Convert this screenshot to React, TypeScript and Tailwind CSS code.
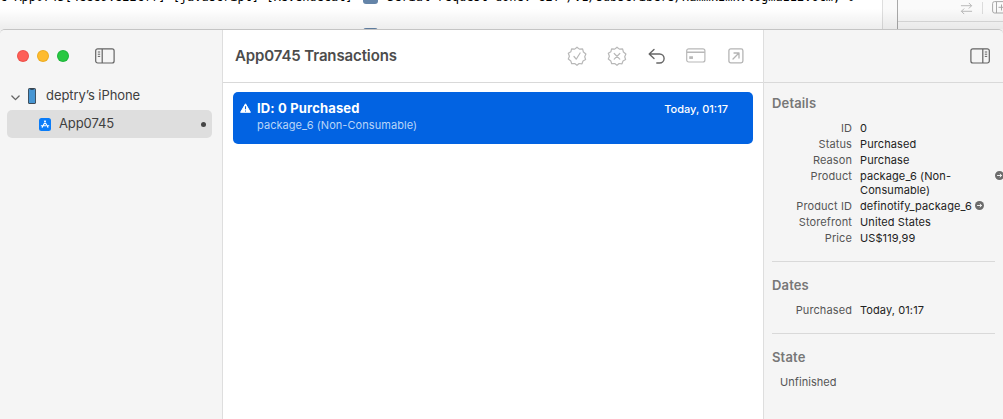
import type { ReactNode } from "react";
import clsx from "clsx";

type Row = { label: string; value: string; link?: "end" | "inline" };

const details: Row[] = [
	{ label: "ID", value: "0" },
	{ label: "Status", value: "Purchased" },
	{ label: "Reason", value: "Purchase" },
	{ label: "Product", value: "package_6 (Non-Consumable)", link: "end" },
	{ label: "Product ID", value: "definotify_package_6", link: "inline" },
	{ label: "Storefront", value: "United States" },
	{ label: "Price", value: "US$119,99" },
];

const dates: Row[] = [{ label: "Purchased", value: "Today, 01:17" }];

const SEAL =
	"M10 1.2 12.4 3.1 15.6 2.9 16.4 6 18.9 8 17.7 10.7 18.6 13.5 16 15 15 17.8 12.1 17.5 10 19.3 7.7 17.5 4.7 17.7 3.8 14.9 1.3 13 2.4 10.2 1.3 7.3 3.9 5.7 4.6 2.8 7.7 3.1Z";

function SealIcon({ children }: { children: ReactNode }) {
	return (
		<svg
			viewBox="0 0 20 20"
			className="h-5 w-5 fill-none stroke-[#b8b8b8] stroke-[1.2]"
			strokeLinejoin="round"
			strokeLinecap="round"
		>
			<path d={SEAL} />
			{children}
		</svg>
	);
}

function SidebarIcon({ flip }: { flip?: boolean }) {
	return (
		<svg
			viewBox="0 0 20 16"
			className={clsx("h-4 w-5 fill-none stroke-[#636363] stroke-[1.2]", flip && "-scale-x-100")}
		>
			<rect x="0.7" y="0.8" width="18.4" height="14.2" rx="2" />
			<path d="M7.2 1v14" />
			<path d="M2.8 4h2.4M2.8 6.2h2.4M2.8 8.4h2.4" strokeWidth="1" />
		</svg>
	);
}

function LinkArrow() {
	return (
		<svg viewBox="0 0 10 10" className="h-[9px] w-[9px] shrink-0">
			<circle cx="5" cy="5" r="5" fill="#6c6c6c" />
			<path d="M2.3 5h5M5.3 3 7.4 5 5.3 7" fill="none" stroke="#fff" strokeWidth="1" />
		</svg>
	);
}

function DetailRow({ label, value, link }: Row) {
	return (
		<div className="flex pb-0.5 text-[11px] leading-[14px] tracking-[0.1px]">
			<span className="w-20 shrink-0 text-right text-[#555]">{label}</span>
			<span
				className={clsx(
					"ml-[8px] text-[#222]",
					link === "end" ? "w-[110px] shrink-0" : "whitespace-nowrap",
				)}
			>
				{value}
			</span>
			{link && (
				<span className={clsx("mt-[2px] shrink-0", link === "end" ? "ml-[25px]" : "ml-[3px]")}>
					<LinkArrow />
				</span>
			)}
		</div>
	);
}

function Heading({ children }: { children: ReactNode }) {
	return (
		<h2 className="text-[13px] leading-4 font-semibold tracking-[0.15px] text-[#777]">{children}</h2>
	);
}

/* Console and editor windows behind the transaction manager */
function Backdrop() {
	return (
		<div className="relative flex h-[29px] w-full overflow-hidden bg-white">
			<div className="w-[882px] shrink-0 overflow-hidden">
				<div className="-mt-[10px] flex h-[14px] items-center font-['DejaVu_Sans_Mono',monospace] text-[12px] leading-[14px] tracking-[-0.03px] whitespace-pre text-black">
					<span className="w-[363px] shrink-0">c App0745[48889:822cff] [javascript] [RevenueCat]</span>
					<span className="flex h-[14px] w-[15px] shrink-0 items-center justify-center rounded-[3px] bg-[#6484a8] text-[9px] text-white">
						i
					</span>
					<span className="ml-[9px]">Serial request done: GET /v1/subscribers/Hammkzmkvlogmazz2vocm, 0</span>
				</div>
				<div className="mt-6 ml-[363px] h-[14px] w-[15px] rounded-[3px] bg-[#6484a8]" />
			</div>
			<div className="w-[16px] shrink-0 border-x border-l-[#dedede] border-r-[#a9a9a9] bg-[#fafafa]" />
			<div className="flex-1 bg-[#fafafa]">
				<div className="flex h-[22px] items-start border-b border-[#dcdcdc] pt-[1px]">
					<svg
						viewBox="0 0 14 14"
						className="mt-px ml-[62px] h-[13px] w-[13px] fill-none stroke-[#b3b3b3] stroke-1"
					>
						<path d="M1 4h11.5M9.5 1l3 3-3 3M13 10H1.5M4.5 7l-3 3 3 3" />
					</svg>
					<div className="mt-px ml-[9px] h-3 w-px bg-[#dcdcdc]" />
					<svg
						viewBox="0 0 14 13"
						className="ml-[9px] h-[13px] w-[14px] shrink-0 fill-none stroke-[#a8a8a8] stroke-1"
					>
						<rect x="0.6" y="0.6" width="15" height="11.4" rx="2" />
						<path d="M4.5 1v11M6.5 6.3h6M9.5 3.5v6" />
					</svg>
				</div>
			</div>
			<div className="absolute inset-0 bg-linear-to-b from-transparent from-30% to-black/7" />
		</div>
	);
}

function Sidebar() {
	return (
		<aside className="flex w-[223px] shrink-0 flex-col border-r border-[#dedede] bg-[#f5f5f5]">
			<div className="flex h-[52px] items-center pl-[17px]">
				<div className="flex gap-2">
					<span className="h-3 w-3 rounded-full border border-[#e2463f]/60 bg-[#fe5f57]" />
					<span className="h-3 w-3 rounded-full border border-[#e1a116]/60 bg-[#febb2e]" />
					<span className="h-3 w-3 rounded-full border border-[#12a934]/60 bg-[#28c841]" />
				</div>
				<div className="ml-[26px]">
					<SidebarIcon />
				</div>
			</div>

			<div className="flex h-7 items-center pl-[11px] text-[13px] text-[#404040]">
				<svg
					viewBox="0 0 10 6"
					className="mt-[3px] h-[6px] w-[9px] fill-none stroke-[#666] stroke-[1.5]"
					strokeLinecap="round"
					strokeLinejoin="round"
				>
					<path d="m1 .8 4 4 4-4" />
				</svg>
				<svg viewBox="0 0 8 16" className="-mt-px ml-2 h-4 w-2">
					<rect width="8" height="16" rx="1.6" fill="#3d4a56" />
					<rect x="0.9" y="0.9" width="6.2" height="14.2" rx="0.9" fill="#4796d3" />
					<path d="M2.3 .8h3.4v1H2.3z" fill="#26323d" />
				</svg>
				<span className="ml-[10px] tracking-[-0.08px]">deptry’s iPhone</span>
			</div>

			<div className="mx-[7px] mr-[10px] flex h-7 items-center rounded-[5px] bg-[#dedede] pr-[6px] pl-8 text-[13px] text-[#404040]">
				<svg viewBox="0 0 12 13" className="h-[13px] w-3">
					<rect width="12" height="13" rx="2.5" fill="#0a7cf8" />
					<path
						d="M6.6 3 3.2 9.3M5.4 3l3.5 6.3M2.3 7.8h4.3M8.3 7.8h1.5"
						fill="none"
						stroke="#fff"
						strokeWidth="1.1"
						strokeLinecap="round"
					/>
				</svg>
				<span className="ml-2 tracking-[-0.1px]">App0745</span>
				<span className="mt-px ml-auto h-[5px] w-[5px] rounded-full bg-[#444]" />
			</div>
		</aside>
	);
}

function Transactions() {
	return (
		<main className="flex w-[541px] shrink-0 flex-col border-r border-[#dedede] bg-white">
			<header className="flex h-[53px] items-center border-b border-[#d9d9d9] pr-[19px] pl-3">
				<h1 className="text-[15px] font-semibold tracking-[-0.12px] text-[#4c4c4c]">App0745 Transactions</h1>
				<div className="ml-auto flex items-center">
					<SealIcon>
						<path d="m7 10.5 2.2 2.7L13.1 7" />
					</SealIcon>
					<div className="ml-5">
						<SealIcon>
							<path d="m7.2 7.5 5.6 5.6M12.8 7.5l-5.6 5.6" />
						</SealIcon>
					</div>
					<svg
						viewBox="0 0 18 18"
						className="ml-[21px] h-[18px] w-[18px] fill-none stroke-[#666] stroke-[1.4]"
						strokeLinecap="round"
						strokeLinejoin="round"
					>
						<path d="M6 2.5 1.2 7 6 11.5M1.4 7h10.2a4.5 4.5 0 0 1 0 9H8.8" />
					</svg>
					<svg viewBox="0 0 20 16" className="ml-[20px] h-4 w-5 fill-none stroke-[#b8b8b8] stroke-[1.2]">
						<rect x="0.7" y="0.8" width="18.2" height="13.2" rx="2" />
						<path d="M.8 4.2h18" strokeWidth="1.5" />
						<rect x="4" y="9" width="2.2" height="1.2" strokeWidth="1.5" />
					</svg>
					<svg
						viewBox="0 0 16 16"
						className="ml-[22px] h-4 w-4 fill-none stroke-[#b4b4b4] stroke-[1.3]"
						strokeLinecap="round"
						strokeLinejoin="round"
					>
						<rect x="0.9" y="0.9" width="14" height="14" rx="1.8" />
						<path d="m5 11 5.7-5.7M6 5h5v5" />
					</svg>
				</div>
			</header>

			<div className="mt-[9px] mr-[10px] ml-[10px] flex h-[52px] rounded-[5px] bg-[#0263e2] pt-2 pr-6 pl-[7px] text-white">
				<svg viewBox="0 0 11 10" className="mt-[3px] h-[10px] w-[11px]">
					<path d="M5.5.8 10.4 9.3H.6z" fill="#fff" stroke="#fff" strokeLinejoin="round" />
					<path d="M5.5 3.2v3M5.5 7.4v1.1" stroke="#0263e2" strokeWidth="1.1" />
				</svg>
				<div className="ml-[6px]">
					<p className="text-[13px] leading-4 font-bold tracking-[0.15px]">ID: 0 Purchased</p>
					<p className="mt-px text-[11px] leading-4 tracking-[0.06px] text-[#b9d5f8]">package_6 (Non-Consumable)</p>
				</div>
				<p className="mt-px mr-px ml-auto text-[11px] leading-4 font-medium">Today, 01:17</p>
			</div>
		</main>
	);
}

function Inspector() {
	return (
		<aside className="flex min-w-0 flex-1 flex-col overflow-hidden bg-[#f5f5f5]">
			<div className="flex h-[53px] items-center justify-end border-b border-[#d9d9d9] pr-[13px]">
				<SidebarIcon flip />
			</div>
			<section className="mr-2 ml-2 h-[179px] border-b border-[#d9d9d9] pt-3">
				<Heading>Details</Heading>
				<div className="mt-[10px] -mr-2">
					{details.map((row) => (
						<DetailRow key={row.label} {...row} />
					))}
				</div>
			</section>
			<section className="mr-2 ml-2 h-[72px] border-b border-[#d9d9d9] pt-[15px]">
				<Heading>Dates</Heading>
				<div className="mt-[10px]">
					{dates.map((row) => (
						<DetailRow key={row.label} {...row} />
					))}
				</div>
			</section>
			<section className="ml-2 pt-[15px]">
				<Heading>State</Heading>
				<p className="mt-[10px] ml-2 text-[11px] leading-[14px] tracking-[0.06px] text-[#555]">Unfinished</p>
			</section>
		</aside>
	);
}

export default function App() {
	return (
		<div className="flex h-[419px] w-[1003px] flex-col overflow-hidden bg-[#efefef] font-['Inter',sans-serif]">
			<Backdrop />
			<div className="flex min-h-0 flex-1 overflow-hidden rounded-t-[5px] border-t border-[#c4c4c4]">
				<Sidebar />
				<Transactions />
				<Inspector />
			</div>
		</div>
	);
}
